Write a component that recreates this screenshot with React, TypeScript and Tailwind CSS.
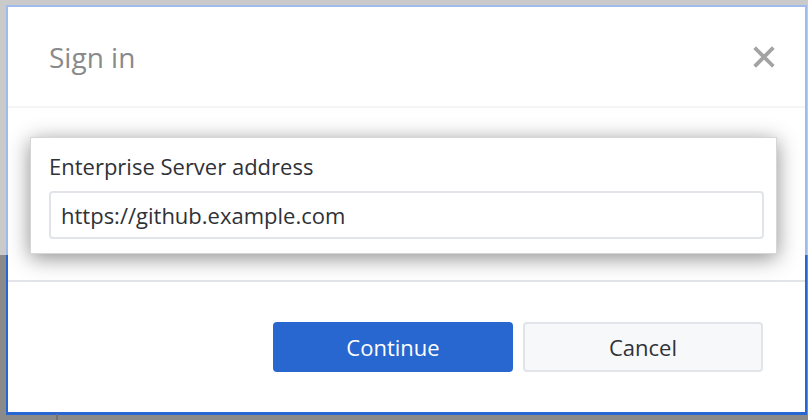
const font = { fontFamily: '"Open Sans", "Noto Sans", "Liberation Sans", sans-serif' };

function CloseIcon() {
  return (
    <svg width="22" height="22" viewBox="0 0 22 22" className="relative z-20">
      <path d="M3 3 L19 19 M19 3 L3 19" stroke="#a3a3a3" strokeWidth="3.8" strokeLinecap="square" />
    </svg>
  );
}

function HighlightCard() {
  return (
    <div className="relative z-20 ml-[22px] mt-[29px] h-[117px] w-[747px] border border-[#d6d6d6] bg-white pl-[18px] pr-[13px] pt-[13px] shadow-[0_4px_20px_rgba(0,0,0,0.45)]">
      <div className="text-[22px] leading-[30px] text-[#2f3237]">Enterprise Server address</div>
      <div className="mt-[10px] flex h-[48px] w-[715px] items-center rounded-[4px] border-2 border-[#e1e4e8] pl-[10px] text-[22px] text-[#2f3237]">
        https://github.example.com
      </div>
    </div>
  );
}

export default function App() {
  return (
    <div className="relative h-[420px] w-[808px] overflow-hidden bg-[#8a8a8a] pl-[6px] pt-[5px]" style={font}>
      {/* bits of the window behind */}
      <div className="absolute bottom-0 left-[56px] h-[6px] w-[2px] bg-[#737373]" />

      <div className="flex h-[410px] w-[801px] flex-col border-2 border-[#2867d3] border-b-[3px] bg-white">
        <div className="flex h-[99px] items-center justify-between pl-[41px] pr-[30px]">
          <span className="relative z-20 text-[28px] leading-[38px] text-[#8a8a8a]">Sign in</span>
          <CloseIcon />
        </div>
        <div className="h-[2px] bg-[#e6e8eb]" />

        <HighlightCard />

        <div className="mt-[26px] h-[2px] bg-[#e1e4e8]" />

        <div className="flex justify-end gap-[10px] pr-[42px] pt-[40px]">
          <button className="h-[50px] w-[240px] rounded-[4px] bg-[#2867cf] text-[22px] text-white">Continue</button>
          <button className="h-[50px] w-[240px] rounded-[4px] border-2 border-[#e1e4e8] bg-[#f7f8fa] text-[22px] text-[#2f3237]">
            Cancel
          </button>
        </div>
      </div>

      {/* lightened band over the upper part of the screenshot */}
      <div className="pointer-events-none absolute left-0 right-0 top-0 z-10 h-[255px] bg-white/55" />
    </div>
  );
}
